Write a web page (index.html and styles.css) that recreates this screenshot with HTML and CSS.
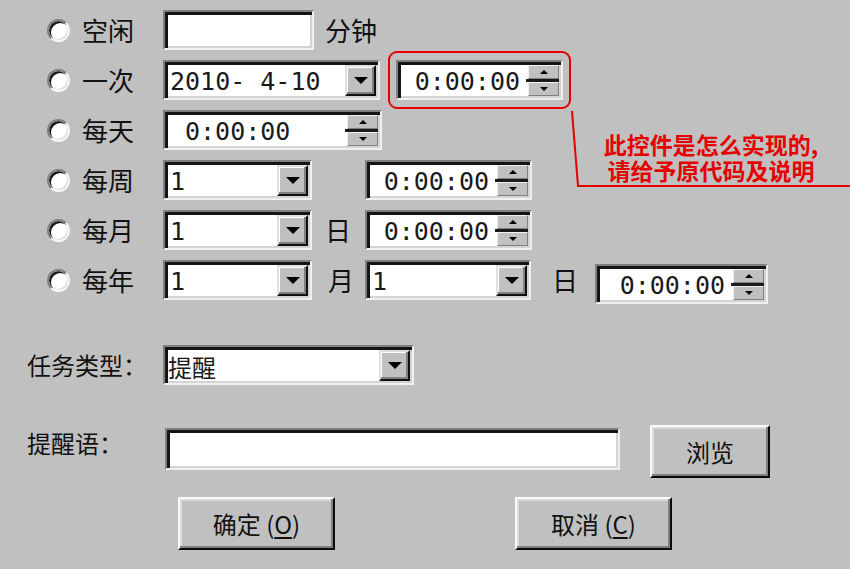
FILE: index.html
```html
<!DOCTYPE html>
<html lang="zh-CN">
<head>
<meta charset="utf-8">
<title>任务设置</title>
<link rel="stylesheet" href="styles.css">
</head>
<body>
<div class="dlg">
  <div class="rows">
    <div class="line">
      <span class="radio"></span><span class="lbl">空闲</span>
      <div class="field w151"></div>
      <span class="unit u1">分钟</span>
    </div>
    <div class="line">
      <span class="radio"></span><span class="lbl">一次</span>
      <div class="field w217"><span class="val">2010- 4-10</span><span class="dd"><i class="tri"></i></span></div>
      <div class="mark">
        <div class="field w167"><span class="val right">0:00:00</span><span class="ud"><span class="ub"><i class="up"></i></span><span class="sep"></span><span class="ub"><i class="dn"></i></span></span></div>
      </div>
    </div>
    <div class="line">
      <span class="radio"></span><span class="lbl">每天</span>
      <div class="field w219"><span class="val pad">0:00:00</span><span class="ud"><span class="ub"><i class="up"></i></span><span class="sep"></span><span class="ub"><i class="dn"></i></span></span></div>
    </div>
    <div class="line">
      <span class="radio"></span><span class="lbl">每周</span>
      <div class="field w149"><span class="val">1</span><span class="dd"><i class="tri"></i></span></div>
      <div class="field w167 ml53"><span class="val right">0:00:00</span><span class="ud"><span class="ub"><i class="up"></i></span><span class="sep"></span><span class="ub"><i class="dn"></i></span></span></div>
    </div>
    <div class="line">
      <span class="radio"></span><span class="lbl">每月</span>
      <div class="field w149"><span class="val">1</span><span class="dd"><i class="tri"></i></span></div>
      <span class="unit u2">日</span>
      <div class="field w167"><span class="val right">0:00:00</span><span class="ud"><span class="ub"><i class="up"></i></span><span class="sep"></span><span class="ub"><i class="dn"></i></span></span></div>
    </div>
    <div class="line">
      <span class="radio"></span><span class="lbl">每年</span>
      <div class="field w149"><span class="val">1</span><span class="dd"><i class="tri"></i></span></div>
      <span class="unit u3">月</span>
      <div class="field w166"><span class="val">1</span><span class="dd"><i class="tri"></i></span></div>
      <span class="unit u4">日</span>
      <div class="field w173 low"><span class="val right">0:00:00</span><span class="ud"><span class="ub"><i class="up"></i></span><span class="sep"></span><span class="ub"><i class="dn"></i></span></span></div>
    </div>
  </div>

  <div class="line task">
    <span class="lbl2">任务类型：</span>
    <div class="field w251"><span class="val cjk">提醒</span><span class="dd"><i class="tri"></i></span></div>
  </div>

  <div class="line remind">
    <span class="lbl2">提醒语：</span>
    <div class="field w455"></div>
    <button class="btn browse">浏览</button>
  </div>

  <div class="line actions">
    <button class="btn ok">确定 (<u>O</u>)</button>
    <button class="btn cancel">取消 (<u>C</u>)</button>
  </div>

  <svg class="anno" width="850" height="569" viewBox="0 0 850 569">
    <polyline points="572,111 578,186 850,186" fill="none" stroke="#e60000" stroke-width="2"/>
  </svg>
  <div class="note">此控件是怎么实现的,<br>请给予原代码及说明</div>
</div>
</body>
</html>
```
FILE: styles.css
```css
html, body {
  margin: 0;
  padding: 0;
}
body {
  background: #c0c0c0;
  width: 850px;
  height: 569px;
  overflow: hidden;
  font-family: "Noto Sans CJK SC", "DejaVu Sans", sans-serif;
  color: #111;
}
.dlg {
  position: relative;
  width: 850px;
  height: 569px;
}
.rows {
  display: flex;
  flex-direction: column;
  gap: 10px;
  padding-top: 10px;
}
.line {
  display: flex;
  align-items: center;
  height: 40px;
}
.radio {
  box-sizing: border-box;
  margin-left: 47px;
  width: 23px;
  height: 23px;
  border-radius: 50%;
  background: #fff;
  border: 2px solid;
  border-color: #808080 #f4f4f4 #f4f4f4 #808080;
  box-shadow: inset 2px 2px 0 #1a1a1a, inset -1px -1px 0 #d8d8d8;
}
.lbl {
  box-sizing: border-box;
  width: 93px;
  padding-left: 12px;
  font-size: 26px;
  line-height: 30px;
}
.unit {
  font-size: 26px;
  line-height: 30px;
}
.u1 { margin-left: 11px; }
.u2 { margin-left: 13px; width: 40px; }
.u3 { margin-left: 16px; width: 37px; }
.u4 { margin-left: 21px; width: 43px; }

.field {
  box-sizing: border-box;
  height: 40px;
  background: #fff;
  border: 2px solid;
  border-color: #808080 #f0f0f0 #f0f0f0 #808080;
  box-shadow: inset 3px 3px 0 #141414, inset -2px -2px 0 #d4d4d4;
  display: flex;
  align-items: stretch;
  font-family: "DejaVu Sans Mono", "Noto Sans CJK SC", monospace;
  font-size: 25px;
  color: #1a1a1a;
}
.w151 { width: 151px; }
.w217 { width: 217px; }
.w167 { width: 167px; }
.w219 { width: 219px; }
.w149 { width: 149px; }
.w166 { width: 166px; }
.w173 { width: 173px; }
.w251 { width: 251px; }
.w455 { width: 455px; height: 42px; margin-left: 2px; }
.ml53 { margin-left: 53px; }
.low { margin-top: 8px; }

.val {
  flex: 1;
  display: flex;
  align-items: center;
  padding-left: 5px;
  padding-top: 2px;
  white-space: pre;
  overflow: hidden;
}
.val.right {
  justify-content: flex-end;
  padding-right: 8px;
}
.val.pad {
  padding-left: 20px;
}
.val.cjk {
  font-family: "Noto Sans CJK SC", sans-serif;
  font-size: 24px;
  padding-left: 3px;
}

.dd {
  box-sizing: border-box;
  width: 31px;
  margin: 3px 2px 2px 0;
  background: #c0c0c0;
  border: 2px solid;
  border-color: #e0e0e0 #101010 #101010 #e0e0e0;
  box-shadow: inset -2px -2px 0 #808080, inset 1px 1px 0 #fff;
  display: flex;
  align-items: center;
  justify-content: center;
}
.tri {
  width: 0;
  height: 0;
  border-left: 7px solid transparent;
  border-right: 7px solid transparent;
  border-top: 7px solid #000;
}

.ud {
  width: 31px;
  margin: 3px 2px 2px 0;
  display: flex;
  flex-direction: column;
}
.ub {
  flex: 1;
  box-sizing: border-box;
  background: #c0c0c0;
  border: 1px solid;
  border-color: #f0f0f0 #808080 #808080 #f0f0f0;
  display: flex;
  align-items: center;
  justify-content: center;
}
.sep {
  height: 3px;
  background: #1a1a1a;
  margin-left: -2px;
}
.up {
  width: 0;
  height: 0;
  border-left: 4px solid transparent;
  border-right: 4px solid transparent;
  border-bottom: 4px solid #000;
}
.dn {
  width: 0;
  height: 0;
  border-left: 4px solid transparent;
  border-right: 4px solid transparent;
  border-top: 4px solid #000;
}

.mark {
  margin-left: 8px;
  padding: 7px 6px;
  border: 2px solid #e60000;
  border-radius: 9px;
}

.task {
  margin-top: 45px;
}
.lbl2 {
  box-sizing: border-box;
  width: 163px;
  padding-left: 27px;
  font-size: 24px;
  line-height: 30px;
}
.remind {
  margin-top: 40px;
  height: 53px;
}
.remind .lbl2 {
  align-self: flex-start;
  margin-top: 3px;
}
.remind .field {
  align-self: flex-start;
  margin-top: 3px;
}

.btn {
  box-sizing: border-box;
  height: 53px;
  padding: 0;
  background: #c0c0c0;
  border: 2px solid;
  border-color: #fafafa #0a0a0a #0a0a0a #fafafa;
  box-shadow: inset -2px -2px 0 #808080, inset 2px 2px 0 #dcdcdc;
  font-family: "Noto Sans CJK SC", sans-serif;
  font-size: 24px;
  color: #111;
  display: flex;
  align-items: center;
  justify-content: center;
  white-space: pre;
}
.btn u {
  text-underline-offset: 3px;
}
.browse {
  width: 120px;
  margin-left: 30px;
}
.actions {
  margin-top: 19px;
  height: 53px;
}
.ok {
  width: 157px;
  margin-left: 178px;
}
.cancel {
  width: 157px;
  margin-left: 180px;
}

.anno {
  position: absolute;
  left: 0;
  top: 0;
  pointer-events: none;
}
.note {
  position: absolute;
  left: 585px;
  top: 131px;
  width: 252px;
  text-align: center;
  font-size: 23px;
  line-height: 26px;
  font-weight: 700;
  color: #e60000;
}
```
